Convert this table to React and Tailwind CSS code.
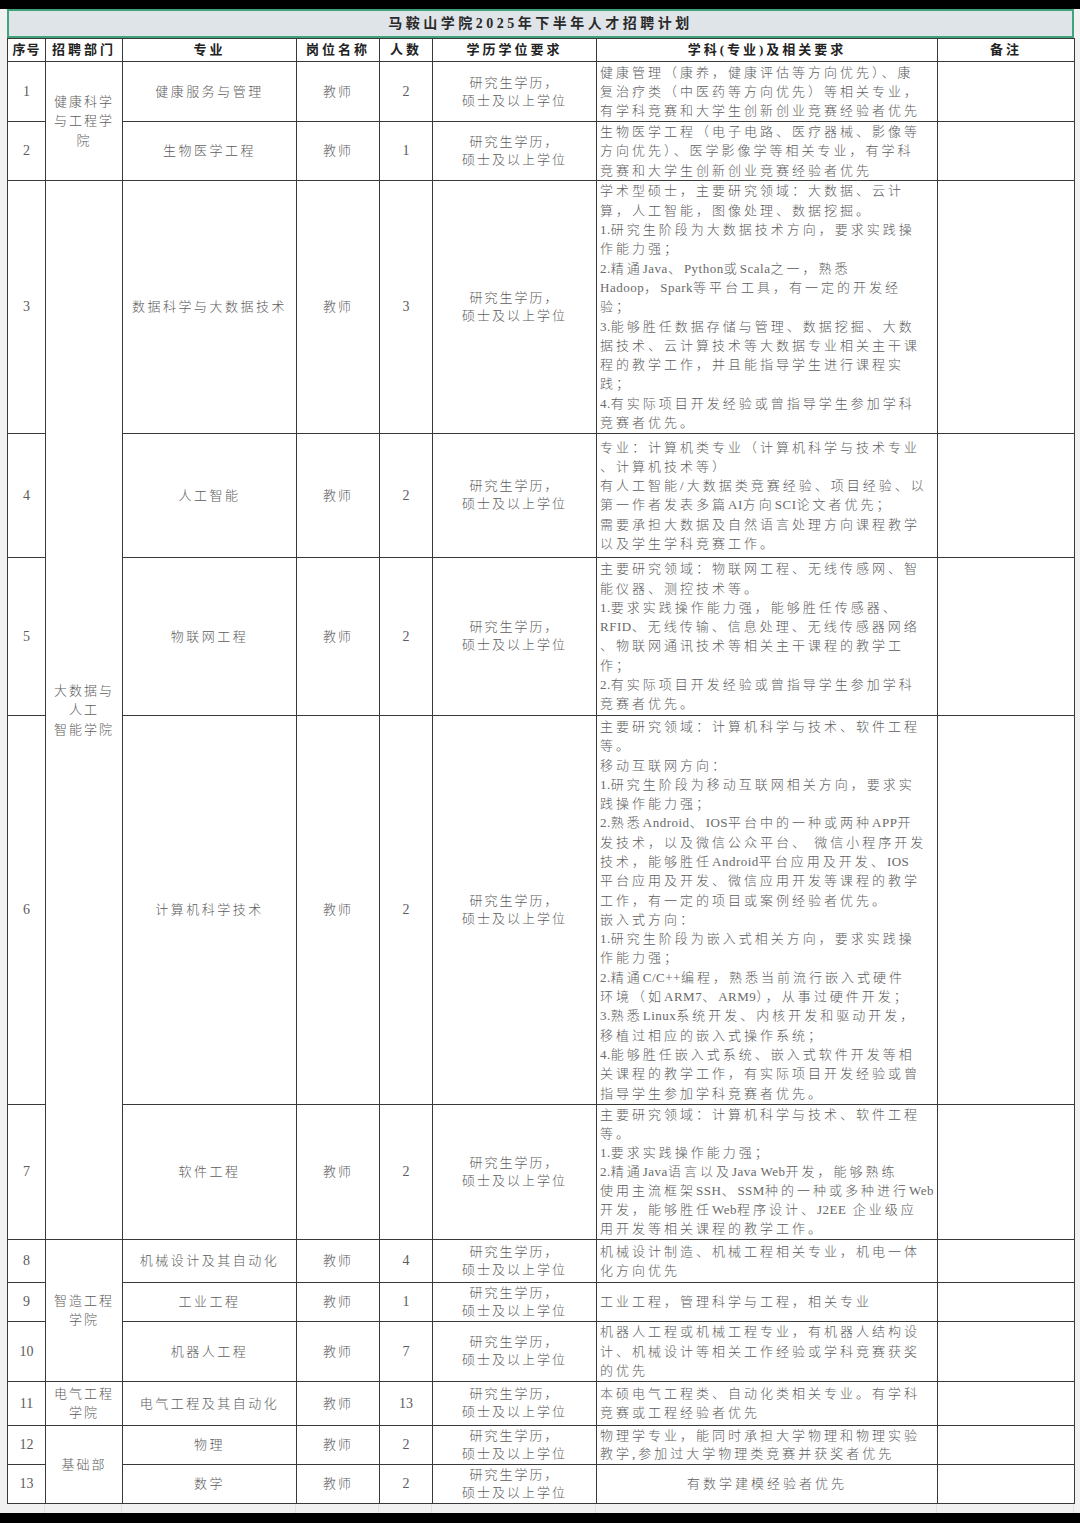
import React from 'react';

const rows = [
  { no: '1', major: '健康服务与管理', n: '2', h: 'h-[60px]', req: [
    '健康管理（康养，健康评估等方向优先）、康',
    '复治疗类（中医药等方向优先）等相关专业，',
    '有学科竞赛和大学生创新创业竞赛经验者优先',
  ] },
  { no: '2', major: '生物医学工程', n: '1', h: 'h-[58px]', req: [
    '生物医学工程（电子电路、医疗器械、影像等',
    '方向优先）、医学影像学等相关专业，有学科',
    '竞赛和大学生创新创业竞赛经验者优先',
  ] },
  { no: '3', major: '数据科学与大数据技术', n: '3', h: 'h-[253px]', req: [
    '学术型硕士，主要研究领域：大数据、云计',
    '算，人工智能，图像处理、数据挖掘。',
    '1.研究生阶段为大数据技术方向，要求实践操',
    '作能力强；',
    '2.精通Java、Python或Scala之一，熟悉',
    'Hadoop，Spark等平台工具，有一定的开发经',
    '验；',
    '3.能够胜任数据存储与管理、数据挖掘、大数',
    '据技术、云计算技术等大数据专业相关主干课',
    '程的教学工作，并且能指导学生进行课程实',
    '践；',
    '4.有实际项目开发经验或曾指导学生参加学科',
    '竞赛者优先。',
  ] },
  { no: '4', major: '人工智能', n: '2', h: 'h-[124px]', req: [
    '专业：计算机类专业（计算机科学与技术专业',
    '、计算机技术等）',
    '有人工智能/大数据类竞赛经验、项目经验、以',
    '第一作者发表多篇AI方向SCI论文者优先；',
    '需要承担大数据及自然语言处理方向课程教学',
    '以及学生学科竞赛工作。',
  ] },
  { no: '5', major: '物联网工程', n: '2', h: 'h-[158px]', req: [
    '主要研究领域：物联网工程、无线传感网、智',
    '能仪器、测控技术等。',
    '1.要求实践操作能力强，能够胜任传感器、',
    'RFID、无线传输、信息处理、无线传感器网络',
    '、物联网通讯技术等相关主干课程的教学工',
    '作；',
    '2.有实际项目开发经验或曾指导学生参加学科',
    '竞赛者优先。',
  ] },
  { no: '6', major: '计算机科学技术', n: '2', h: 'h-[389px]', req: [
    '主要研究领域：计算机科学与技术、软件工程',
    '等。',
    '移动互联网方向：',
    '1.研究生阶段为移动互联网相关方向，要求实',
    '践操作能力强；',
    '2.熟悉Android、IOS平台中的一种或两种APP开',
    '发技术，以及微信公众平台、 微信小程序开发',
    '技术，能够胜任Android平台应用及开发、IOS',
    '平台应用及开发、微信应用开发等课程的教学',
    '工作，有一定的项目或案例经验者优先。',
    '嵌入式方向：',
    '1.研究生阶段为嵌入式相关方向，要求实践操',
    '作能力强；',
    '2.精通C/C++编程，熟悉当前流行嵌入式硬件',
    '环境（如ARM7、ARM9），从事过硬件开发；',
    '3.熟悉Linux系统开发、内核开发和驱动开发，',
    '移植过相应的嵌入式操作系统；',
    '4.能够胜任嵌入式系统、嵌入式软件开发等相',
    '关课程的教学工作，有实际项目开发经验或曾',
    '指导学生参加学科竞赛者优先。',
  ] },
  { no: '7', major: '软件工程', n: '2', h: 'h-[135px]', lead: 'leading-[19px]', req: [
    '主要研究领域：计算机科学与技术、软件工程',
    '等。',
    '1.要求实践操作能力强；',
    '2.精通Java语言以及Java Web开发，能够熟练',
    '使用主流框架SSH、SSM种的一种或多种进行Web',
    '开发，能够胜任Web程序设计、J2EE 企业级应',
    '用开发等相关课程的教学工作。',
  ] },
  { no: '8', major: '机械设计及其自动化', n: '4', h: 'h-[43px]', req: [
    '机械设计制造、机械工程相关专业，机电一体',
    '化方向优先',
  ] },
  { no: '9', major: '工业工程', n: '1', h: 'h-[39px]', req: [
    '工业工程，管理科学与工程，相关专业',
  ] },
  { no: '10', major: '机器人工程', n: '7', h: 'h-[60px]', req: [
    '机器人工程或机械工程专业，有机器人结构设',
    '计、机械设计等相关工作经验或学科竞赛获奖',
    '的优先',
  ] },
  { no: '11', major: '电气工程及其自动化', n: '13', h: 'h-[44px]', req: [
    '本硕电气工程类、自动化类相关专业。有学科',
    '竞赛或工程经验者优先',
  ] },
  { no: '12', major: '物理', n: '2', h: 'h-[39px]', lead: 'leading-[18px]', req: [
    '物理学专业，能同时承担大学物理和物理实验',
    '教学,参加过大学物理类竞赛并获奖者优先',
  ] },
  { no: '13', major: '数学', n: '2', h: 'h-[39px]', center: true, req: [
    '有数学建模经验者优先',
  ] },
];

// dept cells keyed by first row index
const depts = {
  0: { span: 2, lines: ['健康科学', '与工程学', '院'] },
  2: { span: 5, lines: ['大数据与', '人工', '智能学院'] },
  7: { span: 3, lines: ['智造工程', '学院'] },
  10: { span: 1, lines: ['电气工程', '学院'] },
  11: { span: 2, lines: ['基础部'] },
};

const cols = ['w-[38px]', 'w-[77px]', 'w-[174px]', 'w-[83px]', 'w-[53px]', 'w-[164px]', 'w-[341px]', 'w-[137px]'];
const headers = ['序号', '招聘部门', '专业', '岗位名称', '人数', '学历学位要求', '学科(专业)及相关要求', '备注'];

const cell = 'border-[1.5px] border-[#3a3a3a] p-0 text-center align-middle';

function Line({ text }) {
  const parts = text.split(/([A-Za-z0-9.\/+]+(?: [A-Za-z0-9.\/+]+)*)/);
  return (
    <div className="whitespace-nowrap">
      {parts.map((p, i) =>
        /[A-Za-z0-9]/.test(p)
          ? <span key={i} className="tracking-[0.5px] text-[#6a6a6a]">{p}</span>
          : <React.Fragment key={i}>{p}</React.Fragment>
      )}
    </div>
  );
}

export default function App() {
  return (
    <div className="w-[1080px] h-[1523px] bg-black flex flex-col font-['Liberation_Serif','Noto_Sans_CJK_SC',serif]">
      <div className="h-[9px] shrink-0" />
      <div className="flex-1 bg-[#f1f1f1] pl-[7px] flex flex-col">
        <div className="w-[1067px] h-[29px] bg-[#dfe4e8] border-2 border-[#3fa37c] flex items-center justify-center">
          <span className="text-[14px] font-bold tracking-[3.5px] text-[#2a2a2a]">马鞍山学院2025年下半年人才招聘计划</span>
        </div>
        <table className="w-[1067px] table-fixed border-collapse bg-white">
          <colgroup>
            {cols.map((c, i) => <col key={i} className={c} />)}
          </colgroup>
          <thead>
            <tr className="h-[23px]">
              {headers.map((h, i) => (
                <th key={i} className={`${cell} text-[13px] font-bold text-[#222] ${i === 0 ? 'tracking-[1px]' : 'tracking-[3px]'} whitespace-nowrap`}>{h}</th>
              ))}
            </tr>
          </thead>
          <tbody className="text-[#5c5c5c] font-light">
            {rows.map((r, i) => (
              <tr key={r.no} className={r.h}>
                <td className={`${cell} text-[14px]`}>{r.no}</td>
                {depts[i] && (
                  <td rowSpan={depts[i].span} className={`${cell} text-[13px] tracking-[2px] leading-[19.5px]`}>
                    {depts[i].lines.map(l => <div key={l}>{l}</div>)}
                  </td>
                )}
                <td className={`${cell} text-[13px] tracking-[2.5px] whitespace-nowrap`}>{r.major}</td>
                <td className={`${cell} text-[13px] tracking-[2px]`}>教师</td>
                <td className={`${cell} text-[14px]`}>{r.n}</td>
                <td className={`${cell} text-[13px] tracking-[2px] leading-[18px] whitespace-nowrap`}>
                  <div>研究生学历，</div>
                  <div>硕士及以上学位</div>
                </td>
                <td className={`${cell} ${r.center ? 'text-center' : 'text-left pl-[3px]'} ${r.lead || 'leading-[19.3px]'} text-[13px] tracking-[3px] overflow-hidden`}>
                  {r.req.map((l, k) => <Line key={k} text={l} />)}
                </td>
                <td className={cell} />
              </tr>
            ))}
          </tbody>
        </table>
        <div className="flex-1 flex w-[1067px]">
          {cols.map((c, i) => <div key={i} className={`${c} border-r border-[#e2e2e2]`} />)}
        </div>
      </div>
      <div className="h-[10px] shrink-0" />
    </div>
  );
}
